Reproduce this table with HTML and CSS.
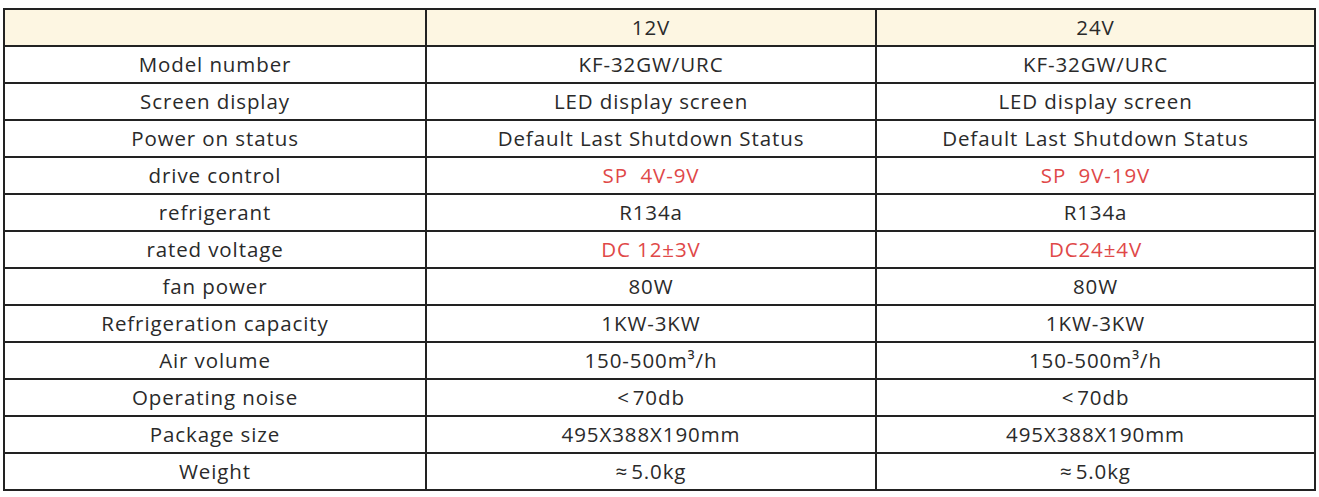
FILE: index.html
```html
<!DOCTYPE html>
<html>
<head>
<meta charset="utf-8">
<link rel="stylesheet" href="styles.css">
</head>
<body>
<table class="spec">
  <colgroup><col class="c1"><col class="c2"><col class="c3"></colgroup>
  <tr class="head"><td></td><td>12V</td><td>24V</td></tr>
  <tr><td>Model number</td><td>KF-32GW/URC</td><td>KF-32GW/URC</td></tr>
  <tr><td>Screen display</td><td>LED display screen</td><td>LED display screen</td></tr>
  <tr><td>Power on status</td><td>Default Last Shutdown Status</td><td>Default Last Shutdown Status</td></tr>
  <tr><td>drive control</td><td class="red">SP&nbsp;&nbsp;4V-9V</td><td class="red">SP&nbsp;&nbsp;9V-19V</td></tr>
  <tr><td>refrigerant</td><td>R134a</td><td>R134a</td></tr>
  <tr><td>rated voltage</td><td class="red">DC 12±3V</td><td class="red">DC24±4V</td></tr>
  <tr><td>fan power</td><td>80W</td><td>80W</td></tr>
  <tr><td>Refrigeration capacity</td><td>1KW-3KW</td><td>1KW-3KW</td></tr>
  <tr><td>Air volume</td><td>150-500m³/h</td><td>150-500m³/h</td></tr>
  <tr><td>Operating noise</td><td>&lt;&#8202;70db</td><td>&lt;&#8202;70db</td></tr>
  <tr><td>Package size</td><td>495X388X190mm</td><td>495X388X190mm</td></tr>
  <tr><td>Weight</td><td>≈&#8202;5.0kg</td><td>≈&#8202;5.0kg</td></tr>
</table>
</body>
</html>
```
FILE: styles.css
```css
html, body { margin: 0; padding: 0; background: #fff; }
body { padding: 8px 0 0 3px; }
.spec {
  border-collapse: collapse;
  width: 1311px;
  table-layout: fixed;
  font-family: "Open Sans", "Noto Sans", "Noto Sans CJK SC", sans-serif;
  font-size: 20.5px;
  letter-spacing: 0.9px;
  color: #2a2a2a;
}
.c1 { width: 422px; }
.c2 { width: 450px; }
.c3 { width: 439px; }
.spec td {
  border: 2px solid #222;
  height: 35px;
  padding: 0;
  text-align: center;
  vertical-align: middle;
  line-height: 35px;
}
.head td { background: #fdf6e2; }
.red { color: #e04848; }
```
